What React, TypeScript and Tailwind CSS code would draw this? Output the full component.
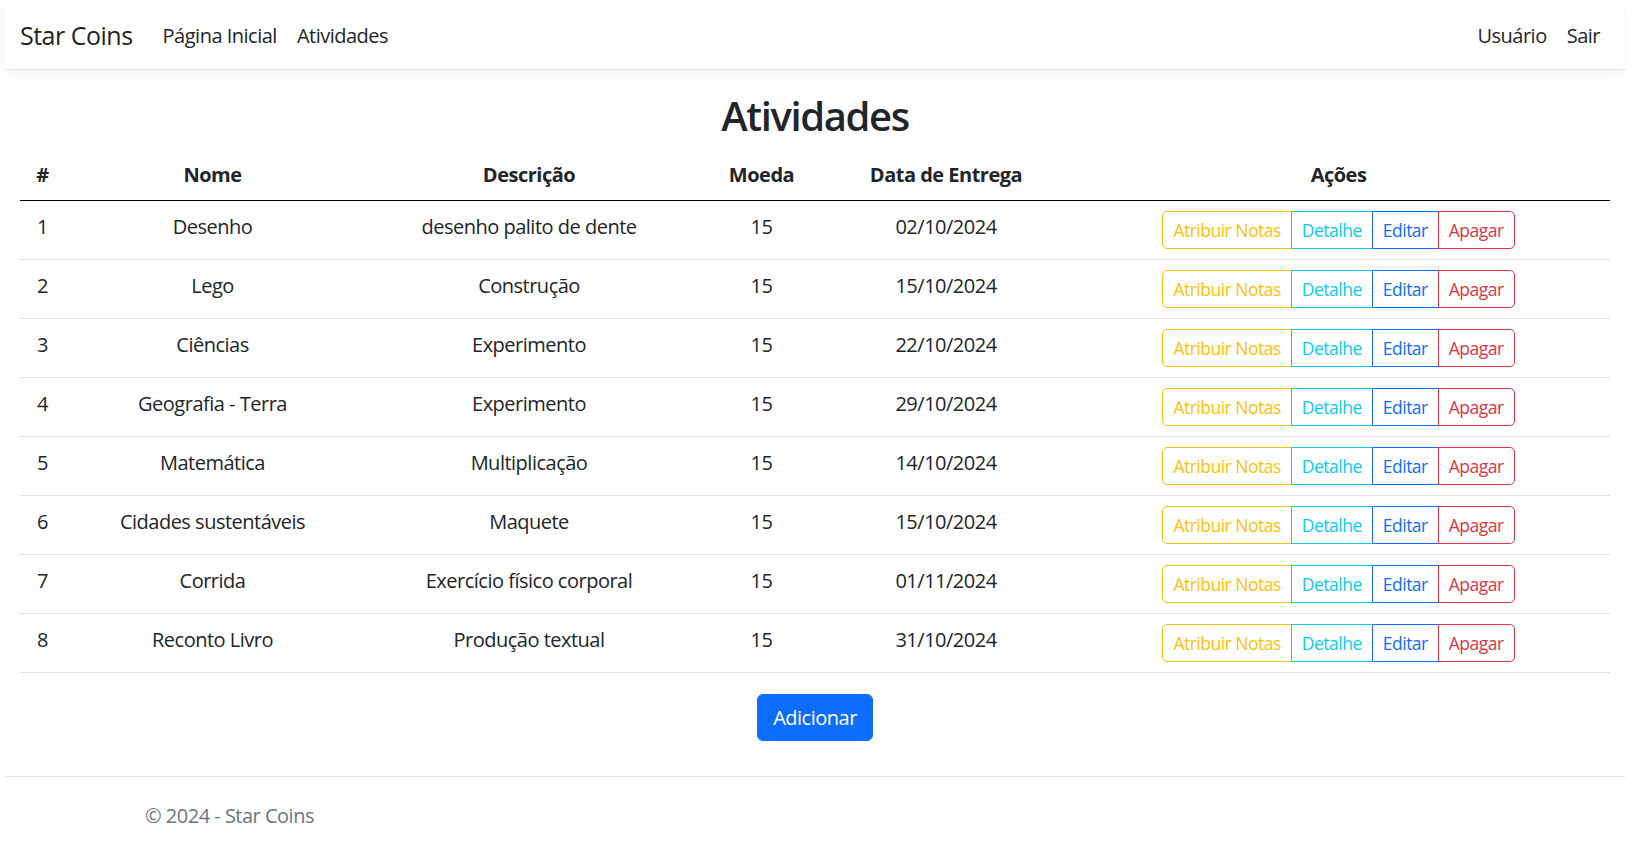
import React from "react";

const rows = [
  ["1", "Desenho", "desenho palito de dente", "15", "02/10/2024"],
  ["2", "Lego", "Construção", "15", "15/10/2024"],
  ["3", "Ciências", "Experimento", "15", "22/10/2024"],
  ["4", "Geografia - Terra", "Experimento", "15", "29/10/2024"],
  ["5", "Matemática", "Multiplicação", "15", "14/10/2024"],
  ["6", "Cidades sustentáveis", "Maquete", "15", "15/10/2024"],
  ["7", "Corrida", "Exercício físico corporal", "15", "01/11/2024"],
  ["8", "Reconto Livro", "Produção textual", "15", "31/10/2024"],
];

function Actions() {
  return (
    <div className="inline-flex text-[17.5px] leading-[26px]">
      <button className="px-[10px] py-[5px] border border-[#ffc107] text-[#ffc107] rounded-l-[5px] bg-white">
        Atribuir Notas
      </button>
      <button className="px-[10px] py-[5px] border border-[#0dcaf0] text-[#0dcaf0] -ml-px bg-white">
        Detalhe
      </button>
      <button className="px-[10px] py-[5px] border border-[#0d6efd] text-[#0d6efd] -ml-px bg-white">
        Editar
      </button>
      <button className="px-[10px] py-[5px] border border-[#dc3545] text-[#dc3545] -ml-px rounded-r-[5px] bg-white">
        Apagar
      </button>
    </div>
  );
}

export default function App() {
  return (
    <div className="min-h-[846px] bg-white text-[#212529] [font-family:'Segoe_UI','Open_Sans',sans-serif] text-[20px] leading-[30px] tracking-[-0.025em] pl-[5px] pr-[2px] flex flex-col">
      <nav className="h-[70px] border-b border-[#e5e7eb] bg-white shadow-[0_5px_15px_rgba(0,0,0,0.05)] flex items-center justify-between px-[15px] pt-[2px]">
        <div className="flex items-center">
          <span className="text-[25px] leading-[37px] text-[rgba(0,0,0,0.9)] mr-[20px]">Star Coins</span>
          <a className="px-[10px] text-[#212529]">Página Inicial</a>
          <a className="px-[10px] text-[#212529]">Atividades</a>
        </div>
        <div className="flex items-center">
          <a className="px-[10px] text-[#212529]">Usuário</a>
          <a className="px-[10px] text-[#212529]">Sair</a>
        </div>
      </nav>

      <main className="px-[15px] pt-[22px] pb-[35px]">
        <h2 className="text-center text-[40px] leading-[48px] font-semibold tracking-[-0.035em] mb-[10px]">Atividades</h2>
        <table className="w-full border-collapse mb-[20px]">
          <colgroup>
            <col className="w-[45px]" />
            <col className="w-[295px]" />
            <col className="w-[338px]" />
            <col className="w-[127px]" />
            <col className="w-[242px]" />
            <col />
          </colgroup>
          <thead>
            <tr className="border-b border-black">
              {["#", "Nome", "Descrição", "Moeda", "Data de Entrega", "Ações"].map((h) => (
                <th key={h} className="p-[10px] font-bold text-center align-top">
                  {h}
                </th>
              ))}
            </tr>
          </thead>
          <tbody>
            {rows.map((r) => (
              <tr key={r[0]} className="border-b border-[#dee2e6]">
                {r.map((c, i) => (
                  <td key={i} className="p-[10px] text-center align-top h-[59px] pt-[11px]">
                    {c}
                  </td>
                ))}
                <td className="p-[10px] text-center align-top">
                  <Actions />
                </td>
              </tr>
            ))}
          </tbody>
        </table>
        <div className="flex justify-center">
          <button className="bg-[#0d6efd] text-white rounded-[6px] px-[15px] py-[7.5px] leading-[30px] border border-[#0d6efd] mt-[1px]">
            Adicionar
          </button>
        </div>
      </main>

      <footer className="border-t border-[#dee2e6] h-[71px] flex items-center">
        <div className="pl-[140px] text-[#6c757d] pt-[8px]">© 2024 - Star Coins</div>
      </footer>
    </div>
  );
}
